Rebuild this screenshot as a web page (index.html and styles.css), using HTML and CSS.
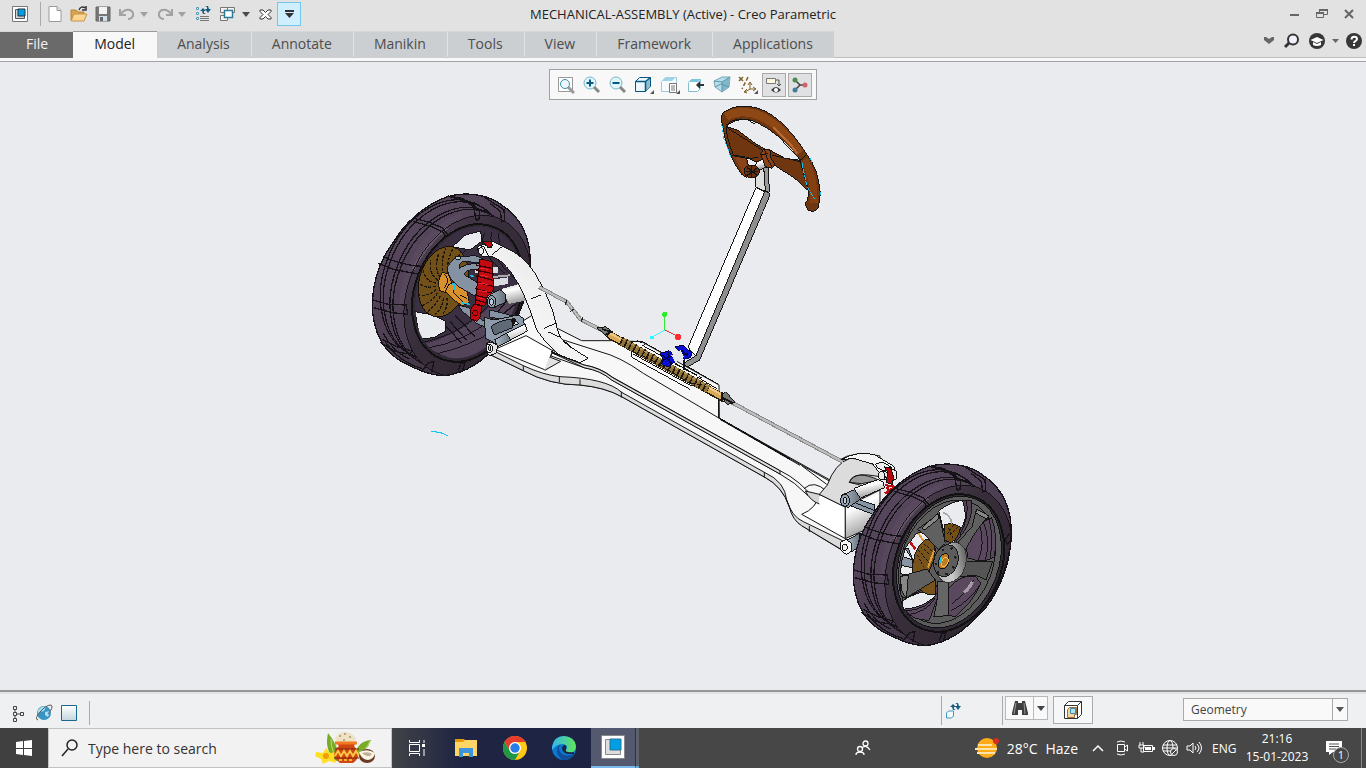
FILE: index.html
```html
<!DOCTYPE html>
<html lang="en">
<head>
<meta charset="utf-8">
<title>MECHANICAL-ASSEMBLY (Active) - Creo Parametric</title>
<link rel="stylesheet" href="styles.css">
</head>
<body>
<div class="app">
<header class="header">
  <div class="titlebar">
    <div class="quick">
      <span class="app-icon"><svg width="16" height="16" viewBox="0 0 16 16"><path d="M.5.5h15v15H.5z" fill="#fff" stroke="#777"/><path d="M3.500 3.500h9v9h-9z" fill="#cfd3d5" stroke="#555"/><path d="M6 3h7v7H6z" fill="#009fe3" stroke="#234"/></svg></span>
      <button aria-label="New"><svg width="16" height="18" viewBox="0 0 16 18"><path d="M2 1.500h8l4 4v11H2z" fill="#fff" stroke="#9a9a9a"/><path d="M10 1.500v4h4" fill="#ddd" stroke="#9a9a9a"/></svg></button>
      <button aria-label="Open"><svg width="18" height="18" viewBox="0 0 18 18"><path d="M1 15V5h5l2 2h6v8z" fill="#d9a352" stroke="#b98434"/><path d="M1 16l3-7h13l-3 7z" fill="#fbd591" stroke="#c79348"/><path d="M9 5c1-3 4-4 6-2m1-2v4h-4" fill="none" stroke="#333" stroke-width="1.500"/></svg></button>
      <button aria-label="Save"><svg width="16" height="18" viewBox="0 0 16 18"><path d="M1 2h14v14H1z" fill="#777" stroke="#666"/><path d="M4 2h8v7H4z" fill="#f2f2f2"/><path d="M4 11h8v5H4z" fill="#cfe0ea"/><path d="M5 12h3v4H5z" fill="#666"/></svg></button>
      <button aria-label="Undo"><svg width="18" height="16" viewBox="0 0 18 16"><path d="M2 3v6h6M3 8c3-5 10-6 12-1 1 4-2 6-5 6" fill="none" stroke="#a2a2a2" stroke-width="2"/></svg></button>
      <button class="drop" aria-label="Undo list"><svg width="8" height="5"><path d="M0 0h8L4 5z" fill="#a0a0a0"/></svg></button>
      <button class="lead" aria-label="Redo"><svg width="18" height="16" viewBox="0 0 18 16"><path d="M16 3v6h-6M15 8C12 3 5 2 3 7c-1 4 2 6 5 6" fill="none" stroke="#a2a2a2" stroke-width="2"/></svg></button>
      <button class="drop" aria-label="Redo list"><svg width="8" height="5"><path d="M0 0h8L4 5z" fill="#a0a0a0"/></svg></button>
      <button class="lead" aria-label="Regenerate"><svg width="16" height="16" viewBox="0 0 16 16"><path d="M1.500 1.500h2v2h-2zm0 5h2v2h-2zm0 5h2v2h-2z" fill="#fff" stroke="#559dba"/><path d="M5 10.500h9m-9 2h9m-9 2h9" stroke="#777"/><path d="M5 5l3-3 3 3H9v2l2 1H8L7 5zM10 3h2V1L10 0h3l1 3h2l-3 4-3-4z" fill="#145d85"/></svg></button>
      <button aria-label="Windows"><svg width="17" height="16" viewBox="0 0 17 16"><path d="M1.500 1.500h7v5h-7zm7 0h7v5h-7zm-7 8h7v5h-7z" fill="#f3f3f3" stroke="#777"/><path d="M5.500 4.500h8v7h-8z" fill="#fff" stroke="#2e7a99" stroke-width="1.500"/></svg></button>
      <button class="drop wide" aria-label="Windows list"><svg width="8" height="5"><path d="M0 0h8L4 5z" fill="#4a4a4a"/></svg></button>
      <button aria-label="Close window"><svg width="13" height="11" viewBox="0 0 13 11"><path d="M1 1h3l2.500 2.500L9 1h3v1.500L9 5.500l3 3V10H9L6.500 7.500 4 10H1V8.500l3-3-3-3z" fill="#fff" stroke="#333"/></svg></button>
      <button class="customize" aria-label="Customize"><svg width="9" height="8"><path d="M0 0h9v2H0zM0 3h9L4.500 8z" fill="#333"/></svg></button>
    </div>
    <h1 class="title">MECHANICAL-ASSEMBLY (Active) - Creo Parametric</h1>
    <div class="win">
      <button aria-label="Minimize"><svg width="10" height="10"><path d="M0 5h9v2H0z" fill="#666"/></svg></button>
      <button aria-label="Restore"><svg width="12" height="10" viewBox="0 0 12 10"><path d="M3.500 3V.5h8v5H8M.5 3.500h7v5h-7z" fill="none" stroke="#666"/><path d="M3 1h9M0 4h8" stroke="#666" stroke-width="2"/></svg></button>
      <button aria-label="Close"><svg width="10" height="10"><path d="M1 1l8 8M9 1L1 9" stroke="#666" stroke-width="2"/></svg></button>
    </div>
  </div>
  <div class="ribbon">
    <nav class="tabs">
      <a class="tab file" href="#">File</a><a class="tab active" href="#">Model</a><a class="tab" href="#">Analysis</a><a class="tab" href="#">Annotate</a><a class="tab" href="#">Manikin</a><a class="tab" href="#">Tools</a><a class="tab" href="#">View</a><a class="tab" href="#">Framework</a><a class="tab" href="#">Applications</a>
    </nav>
    <div class="help">
      <button aria-label="Minimize ribbon"><svg width="12" height="8"><path d="M1 0h2l3 2 3-2h2v3L6 7 1 3z" fill="#666"/></svg></button>
      <button aria-label="Search commands"><svg width="16" height="16"><circle cx="9" cy="6.500" r="5" fill="#f0f4fa" stroke="#333" stroke-width="2"/><path d="M5 10l-4 4" stroke="#333" stroke-width="3"/></svg></button>
      <button aria-label="Learning"><svg width="16" height="16"><circle cx="8" cy="8" r="8" fill="#373737"/><path d="M1.500 7L8 4l6.500 3L8 10z" fill="#fff"/><path d="M4 9v3q4 2 8 0V9l-4 2z" fill="#fff"/></svg></button>
      <button class="drop" aria-label="Learning list"><svg width="7" height="4"><path d="M0 0h7L3.500 4z" fill="#666"/></svg></button>
      <button aria-label="Help"><svg width="16" height="16"><circle cx="8" cy="8" r="8" fill="#373737"/><path d="M5.500 6.500c0-4 5.500-3.500 5.500-.5 0 2-3 2-3 4" fill="none" stroke="#fff" stroke-width="2"/><path d="M7 11h2v2H7z" fill="#fff"/></svg></button>
    </div>
  </div>
</header>

<main class="canvas">
  <svg class="model" viewBox="0 62 1366 628" role="img" aria-label="Front axle assembly with steering wheel" shape-rendering="crispEdges">
    <defs>
      <linearGradient id="side" x1="0" x2="1" y1=".3" y2=".6"><stop offset="0" stop-color="#4d3f52"/><stop offset=".1" stop-color="#463a4a"/><stop offset=".4" stop-color="#382e3b"/><stop offset="1" stop-color="#2f2732"/></linearGradient>
      <linearGradient id="tread" x1="0" x2=".7" y1=".2" y2="1"><stop offset="0" stop-color="#5a495f"/><stop offset=".55" stop-color="#4d3f53"/><stop offset="1" stop-color="#302733"/></linearGradient>
      <linearGradient id="pipe" x1="0" x2=".35" y1="0" y2="1"><stop offset="0" stop-color="#b5b5b5"/><stop offset=".4" stop-color="#fff"/><stop offset="1" stop-color="#999"/></linearGradient>
      <linearGradient id="metal"><stop offset="0" stop-color="#b0bbc8"/><stop offset="1" stop-color="#66717e"/></linearGradient>
      <linearGradient id="arm" x1="0" x2="1" y1="1" y2="0"><stop offset="0" stop-color="#cfcfcf"/><stop offset=".45" stop-color="#f4f4f4"/><stop offset="1" stop-color="#dedede"/></linearGradient>
      <linearGradient id="hub" x1="0" x2="1" y1="1" y2=".2"><stop offset="0" stop-color="#aaa"/><stop offset=".5" stop-color="#ccc"/><stop offset="1" stop-color="#555"/></linearGradient>
      <clipPath id="hull"><path id="hullShape" d="M22 355C24 290 42 230 83 175C115 120 150 88 195 60C230 38 265 27 300 27C350 28 390 42 415 64C455 90 482 135 492 185C500 240 495 300 473 358C450 420 420 465 382 495C335 545 280 570 232 572C190 570 150 550 110 530C68 505 40 465 30 420C24 400 22 380 22 355Z"/></clipPath>
      <g id="tire">
        <use href="#hullShape" fill="url(#tread)"/>
        <g clip-path="url(#hull)">
          <g fill="none" stroke="#151218" stroke-width="4">
            <ellipse cx="235" cy="282" rx="178" ry="246" transform="rotate(22 235 282)"/>
            <ellipse cx="244" cy="288" rx="178" ry="246" transform="rotate(22 244 288)"/>
            <ellipse cx="264" cy="305" rx="178" ry="246" transform="rotate(22 264 305)"/>
            <ellipse cx="273" cy="311" rx="178" ry="246" transform="rotate(22 273 311)"/>
          </g>
          <ellipse cx="308" cy="332" rx="180" ry="250" transform="rotate(22 308 332)" fill="url(#side)"/>
          <path d="M145 254Q180 180 245 130" fill="none" stroke="#87778b" stroke-width="9" opacity=".45"/>
          <path d="M110 365C118 235 180 140 290 90" fill="none" stroke="#604f65" stroke-width="16" opacity=".45"/>
          <ellipse cx="308" cy="332" rx="180" ry="250" transform="rotate(22 308 332)" fill="none" stroke="#151218" stroke-width="3"/>
        </g>
        <use href="#hullShape" fill="none" stroke="#151218" stroke-width="4"/>
        <g fill="none" stroke="#151218" stroke-width="4">
          <path d="M252 35l45 10 30 16 17 15-2 28-8 2-8-40-31-25-45-8M147 100l48 12 37 17 18 22-2 12-13-20-38-20-52-13M55 216l44 16 45 10 28 2-2 24-35-5-50-10-45-18M24 345l45 13 55 2 4 28-47-5-55-15M50 463l48 23 42 12-4 10-44-8-47-28M170 560l20-27 17-3-7 30M280 557l8-22 12-2-8 26M357 36l34 22 26 16 2 35-9 2-4-32-30-23M492 260l-8 8-6-15 15-20"/>
          <path d="M60 470q45 63 110 80M55 445q28 55 78 77M492 280Q475 375 425 440"/>
        </g>
        <ellipse cx="308" cy="324" rx="158" ry="213" transform="rotate(22 308 324)" fill="#302834" stroke="#111" stroke-width="6"/>
      </g>
      <clipPath id="leftHole"><ellipse cx="307" cy="322" rx="148" ry="205" transform="rotate(22 307 322)"/></clipPath>
    </defs>

    <!-- left wheel -->
    <g transform="translate(365 185) scale(.33333)" stroke-width="3">
      <use href="#tire"/>
      <g clip-path="url(#leftHole)" stroke="#151218">
        <path d="M130 100h380v450H130z" fill="#3a3042" stroke="none"/>
        <path d="M165 480Q280 455 370 370L450 330 450 480 330 550Z" fill="#544459" stroke="none"/>
        <path d="M170 472q120-20 220-130M185 490q120-20 210-100M220 505q90-20 170-70M360 145q-30 45 60 120M380 140q-15 70 70 140M400 145q0 70 70 120M345 140q-50 70-80 90" fill="none"/>
        <path d="M262 185L302 150 347 138 351 168 315 195Z" fill="#e9ebef"/>
        <path d="M150 380L205 390 243 410 240 440 205 458 165 462Z" fill="#e9ebef"/>
        <path d="M330 245h70v20h-70zM370 285l60-8v20l-60 10z" fill="#d9dce1" stroke="none"/>
        <path d="M375 277l60-6" stroke="#aaa" stroke-width="6"/>
        <path d="M240 420l50 55M255 410l50 55M270 390l60 65M390 390l50-60M410 390l50-40" fill="none" stroke-width="4"/>
      </g>
      <ellipse cx="235" cy="290" rx="72" ry="108" transform="rotate(16 235 290)" fill="#725019" stroke="#161008"/>
      <g fill="none" stroke="#1e1608" stroke-width="4" stroke-dasharray="9 4">
        <path d="M236 270Q225 225 243 190M226 278Q205 245 222 205M218 286Q190 265 197 225M214 294Q180 290 175 255M212 304Q180 312 165 295M214 314Q188 335 163 330M218 324Q200 350 170 362M226 332Q212 362 188 380M236 338Q232 370 210 388M246 340Q250 366 232 388M247 265Q245 225 265 188M258 262Q262 235 288 203"/>
      </g>
      <g fill="#d9912e" stroke="#1b1308"><path d="M232 262l18 5 10 25-15 32-22-8-3-28z"/><path d="M250 300l22-12 34 33 7 30-20 12-27-18-25-26z"/><path d="M238 268q20 15 0 40M271 292l-5 30 28 28M286 330l20 10" fill="none"/></g>
      <path d="M260 297h18m-9-12v30m22 39l25 4m-2-86l13 2" stroke="#18bfe8" stroke-width="4" fill="none"/>
      <g fill="#8592a1" stroke="#15191f">
        <path d="M280 360l30 8 40 37 28 2-5 25-40-18-42-36z"/><path d="M375 375l70 18-10 12-60-8z"/>
        <path fill-rule="evenodd" d="M263 225l15-12 22 2 28-4 25 10-5 32-30 1q-25 6-17 18l110 60-20 36-107-61q-35-25-38-60zM295 228q-14 5-12 24 8-14 58-18z"/>
        <ellipse cx="279" cy="219" rx="9" ry="6" fill="#b8c2cd"/>
      </g>
      <g stroke="#330000" fill="#c20b10">
        <path d="M345 222l36 8 5 82-28 52-28-8z"/>
        <path d="M332 240l48 10m-48 5l55 12m-55 5l55 15m-57 3l57 15m-57 5l52 15m-52 5l44 12m-44 2l35 10" stroke="#3b0006" stroke-width="4"/>
        <path d="M345 249l25 4m-26 17l26 5m-30 19l28 4m-30 18l28 4m-28 18l20 3" stroke="#f0232c"/>
        <path d="M317 372l10-14 24 5-5 32-9 14-21-8z"/>
        <circle cx="331" cy="384" r="8"/>
      </g>
    </g>

    <!-- chassis beam -->
    <g transform="translate(480 320) scale(.33333)" fill="#f7f7f7" stroke="#131313" stroke-width="3" stroke-linejoin="round">
      <path d="M175-25L232 25 305 62H395L485 65 717 195 718 295 1050 484 1165 540 1165 635 1095 696 965 617Q940 600 928 560Q908 500 855 472L425 230Q375 202 300 195Q210 195 130 152L20 99 20 70 100 20Z"/>
      <path d="M22 83L130 137Q190 165 240 170Q380 175 425 217L855 458Q915 485 920 540Q935 590 970 605L1100 668 1095 695 965 617Q937 600 928 560Q908 500 855 472L425 230Q375 202 300 195Q210 195 130 152L20 99Z" fill="#dcdcdc"/>
      <path d="M130 137v15M238 170v17M300 178v17M424 215v18M853 456v18M988 618v18" fill="none"/>
      <path d="M250 60L360 95Q420 110 490 160L718 295M215 98L312 135Q360 142 398 172L900 452Q960 480 1010 545M210 107L312 143Q365 152 395 180L900 462Q945 486 985 528" fill="none"/>
      <path d="M215 98l97 37q48 8 86 38L900 452v10L395 180q-32-28-83-37z" fill="#ddd"/>
      <path d="M718 295L1050 480M965 437L1040 493M972 506q30-28 68 8M720 298L960 436" fill="none"/>
      <path d="M718 295L930 417" stroke-width="5"/>
      <path d="M45 88L138 47 218 92 196 150Z" fill="#fff"/>
      <path d="M218 92l-7 20 31 12-46 26-3-1M216 90l55 25" fill="#e1e1e1"/>
      <path d="M965 583Q1010 565 1018 523L1096 561V656Z" fill="#fff"/>
      <path d="M1096 561L1200 510V610L1096 656Z" fill="url(#pipe)"/>
      <path d="M1018 523L1042 495Q1065 430 1110 415Q1160 415 1200 445V470L1165 465Q1115 460 1108 487L1160 500 1095 561Z" fill="#dcdcdc"/>
      <path d="M1018 523l-42-10q15 30 42 39" fill="#d4d4d4"/>
      <path d="M1075 422Q1120 390 1200 408V450Q1160 412 1110 415Z"/>
      <path d="M1108 487q20-40 90-6l-54 10z" fill="#999"/>
    </g>

    <!-- upper left arm and joints -->
    <g transform="translate(365 185) scale(.33333)" stroke="#151515" stroke-width="3">
      <path d="M410 312l70-20 25 50-73 15z" fill="url(#pipe)" stroke="none"/>
      <path d="M500 267l14 10 8 20-8 10" fill="#8d9bac"/>
      <path d="M338 185L356 178 380 168 415 185Q470 205 510 265Q560 350 573 415Q580 460 610 482L670 520 645 533 583 510Q540 475 515 435Q480 320 440 265Q408 220 380 215L350 213Q335 203 338 185Z" fill="url(#arm)"/>
      <path d="M380 210L411 185M497 342L527 330M537 430L572 415M558 500L585 510M548 440l36 16 40 35" fill="none"/>
      <path d="M345 182l12 3 15 30 8 0M356 178l25 10" fill="none"/>
      <path d="M355 171l22 0 7 10-14 8z" fill="#b9080e"/>
      <ellipse cx="348" cy="198" rx="8" ry="10" fill="#eee"/>
      <path d="M367 333L405 314 421 327V352L386 368Q365 365 365 345Z" fill="url(#metal)"/>
      <ellipse cx="380" cy="350" rx="13" ry="18" fill="#91a0b0"/><ellipse cx="379" cy="351" rx="6" ry="10" fill="#bdc9d5"/>
      <path fill-rule="evenodd" d="M357 397L388 405 459 390 475 400 478 420 400 459 390 475 361 459 360 427ZM382 430l65-31 13 17-69 30z" fill="#8d9bac"/>
      <path d="M378 425Q400 405 440 403l3 25-55 22z" fill="#606a76"/>
      <path d="M390 463L480 417 487 438 400 484Q390 480 390 463Z" fill="url(#pipe)"/>
      <path d="M390 463l35-18 12 21-37 18q-10-8-10-21z" fill="url(#metal)"/>
      <path d="M364 475l18-3 16 10-4 22-20 8-10-12z" fill="#e4e4e4"/><ellipse cx="373" cy="490" rx="9" ry="13" fill="#f4f4f4"/><ellipse cx="374" cy="490" rx="4" ry="8" fill="#ddd"/>
    </g>

    <!-- tie rods -->
    <g fill="none" stroke-linejoin="round">
      <path d="M539 287l28 15 13 17 31 16M731 402l112 60" stroke="#8a8a8a" stroke-width="4"/>
      <path d="M539 287l28 15 13 17 31 16M731 402l112 60" stroke="#bdbdbd" stroke-width="2"/>
      <path d="M567 300l-2 5M574 309l-4 3M583 317l-2 5" stroke="#222"/>
    </g>

    <!-- steering column and wheel -->
    <g transform="translate(640 95) scale(.33333)" stroke="#151515" stroke-width="3">
      <path d="M348 278L374 290 168 784 144 757Z" fill="#fff"/>
      <path d="M374 290L387 292 388 305 179 795 140 817 131 805 168 782Z" fill="#8e8e8e"/>
      <path d="M347 240L371 215 376 289 347 276Z" fill="#ddd"/><path d="M371 214h14l3 78-12-3z" fill="#999"/>
      <g fill="#703610">
        <path d="M256 94L292 105 345 145 389 170 390 190 358 207 322 187 281 184 270 170Z"/>
        <path d="M362 174L384 162 435 190 480 196 505 287 464 250 400 208 377 216Z"/>
        <path d="M245 80Q240 58 257 48Q285 30 330 35C395 42 450 100 500 178Q535 220 541 295L535 338Q525 355 505 345Q490 330 502 315L507 292 480 195C445 145 385 92 330 75Q285 67 258 95Q260 130 280 180L320 187 322 205 340 225 320 247 306 239Q260 180 245 80Z"/>
        <path d="M284 186h34l4 50-10 6z" fill="#8a4318" stroke="none"/>
      </g>
      <path d="M258 65Q295 43 345 57Q420 82 480 174" fill="none" stroke="#8d4815" stroke-width="25"/>
      <path d="M494 194Q524 250 522 325" fill="none" stroke="#844013" stroke-width="22"/>
      <path d="M400 98Q450 142 472 175" fill="none" stroke="#b96b35" stroke-width="6"/>
      <path d="M257 92Q280 67 320 73L345 87M257 95l110 70M275 181l50 10 28-4M480 200l-85-20M500 178l-22 20" fill="none"/>
      <path d="M349 201l22-9 13 8-3 16-21 8-13-8z" fill="url(#pipe)"/>
      <path d="M362 177l10-15 21 4-3 20 15 22-9 12-20-5z" fill="#8b4316"/><path d="M374 166l8 25 14 25M364 178l20-2" fill="none"/>
      <ellipse cx="335" cy="229" rx="23" ry="19" fill="#6b310b"/><path d="M317 229h38m-20-18v38m-14-32l30 24m0-22l-30 23" fill="none" stroke-width="4"/>
      <path d="M245 86l7 45 21 55M486 205l15 70 23 38M511 188l5 15m26 88v8" fill="none" stroke="#14c7f2" stroke-dasharray="14 4"/>
      <path d="M75 705V658" stroke="#36e836"/><path d="M75 705l40 20" stroke="#f33"/><path d="M75 705l-40 22" stroke="#3df5fa"/>
      <g stroke="none"><circle cx="74" cy="658" r="8" fill="#28ef28"/><circle cx="114" cy="726" r="9" fill="#ff2d2d"/><circle cx="36" cy="728" r="6" fill="#30f5fa"/></g>
    </g>

    <!-- rack housing -->
    <g transform="translate(580 300) scale(.33333)" stroke="#151515" stroke-width="3" fill="none">
      <path d="M155 155V172L330 268M160 162L335 258M165 150L370 268M152 125h35l63 35M158 142L345 250M320 198l95 55M350 230l60 36M185 135L350 225"/>
      <path d="M85 103L435 297" stroke="#291f0e" stroke-width="24"/><path d="M87 103L435 295" stroke="#d8aa57" stroke-width="18"/><path d="M90 100L435 290" stroke="#f0cb87" stroke-width="5"/>
      <path d="M122 122L385 268" stroke="#8e7237" stroke-width="24"/>
      <path d="M122 122L385 268" stroke="#201808" stroke-width="26" stroke-dasharray="5 10"/>
      <path d="M128 117L388 261" stroke="#b3914e" stroke-width="5" stroke-dasharray="8 7"/>
      <path d="M160 155l55 25 115 70 35 5M170 120l25 15M260 180l105 53" stroke-dasharray="20 7"/>
      <path d="M52 84l25-4 19 15-16 14-14-12zM423 289l14-14 27 31-22 8z" fill="#777"/><path d="M65 87l28 8-17 10M425 292l35 17M427 277l-2 25" stroke-width="5"/>
      <g fill="#090ed8" stroke="#030340"><path d="M240 160l28-8 15 16 7 13-12 10-14 10-19-8 5-15z"/><path d="M285 140l24-4 27 23-5 14-20 5-8-17z"/><path d="M247 165l30 25m5-25l-35 17m18-25l7 40m30-51l22 23m-27-8l26 1" stroke-width="4"/></g>
      <path d="M274 166l28-15 10 20-25 17z" fill="#e4e4ed" stroke="none"/>
      <path d="M312 180v30M416 295v58" stroke-width="5"/>
    </g>

    <!-- right wheel -->
    <g transform="translate(780 440) scale(.33333)" stroke="#151515" stroke-width="3">
      <path d="M182 60Q235 30 285 45L340 78 350 100 315 120 278 72 220 55Z" fill="#f5f5f5"/>
      <path d="M285 73l23-7 29 18-14 15-28-15zM309 96l20-14 20 12v22l-23 12z" fill="#eee"/>
      <path d="M312 80l20 5 8 22-2 27-20-7 6-30z" fill="#b3090d"/>
      <path d="M316 135l28 5-30 20m5-20l15 24m-8-28l-4 27" fill="none" stroke="#c30b0d" stroke-width="6"/>
      <path d="M222 145L295 118 310 127 313 143 240 175Z" fill="url(#pipe)"/>
      <path d="M218 173l67 22v30l-72-27z" fill="#8795a4"/><path d="M217 185l66 26" fill="none"/>
      <path d="M184 166l40-17 18 28-38 26q-18-5-20-37z" fill="url(#metal)"/><ellipse cx="195" cy="181" rx="13" ry="18" fill="#91a0b0"/><ellipse cx="195" cy="182" rx="6" ry="9" fill="#bdc9d5"/>
      <ellipse cx="305" cy="107" rx="9" ry="13" fill="#e9e9e9"/>
      <path d="M202 300l36-20v40l-23 15z" fill="url(#metal)"/>
      <path d="M182 307l17-9 15 12v24l-15 9-17-12z" fill="#f7f7f7"/><ellipse cx="194" cy="322" rx="8" ry="10" fill="#eee"/>
      <use href="#tire" x="198" y="45"/>
      <ellipse cx="507" cy="366" rx="148" ry="205" transform="rotate(22 507 366)" fill="#5c5c5c" stroke="#111" stroke-width="3"/>
      <ellipse cx="501" cy="365" rx="137" ry="192" transform="rotate(22 501 365)" fill="none"/>
      <path d="M476 213Q510 185 548 181L575 182Q580 210 555 270L526 308 500 305Z" fill="#e9ebef"/>
      <path d="M548 181l27 1q5 42-20 88l-29 38q-10-10 12-36 30-30 10-91z" fill="#554458"/>
      <path d="M560 182q8 50-20 102" fill="none"/>
      <path d="M493 255q25-10 48 7-2 30-28 47l-18-9z" fill="#734f16"/><path d="M505 263l18 40m-2-47l-22 30m34-24l-30 30" stroke-dasharray="7 6"/>
      <path d="M490 218q22 8 25 33" fill="none" stroke="#aaa" stroke-width="5"/>
      <path d="M557 315Q593 248 635 233Q654 290 643 350Q615 373 564 354Z" fill="#5a495e"/><path d="M600 260q15 50-5 102m15-116q23 55 6 114m11-122q15 55 3 115" fill="none"/>
      <path d="M505 445Q545 400 587 410L603 430Q580 485 525 530L505 526Z" fill="#5a495e"/><path d="M580 421q-15 35-65 70M600 435q-30 48-88 78" fill="none"/><path d="M577 425q-8 20-25 32" fill="none" stroke="#a798aa" stroke-width="10"/>
      <path d="M367 483Q410 453 470 435L475 465 448 541Q395 542 373 507Z" fill="#5a495e"/><path d="M367 483q45-30 90-31l10 15q-35 36-97 41z" fill="#e9ebef"/><path d="M415 445q25-25 53-28v45q-28 8-53-17z" fill="#77521a"/><path d="M370 513q75 0 105-60M380 525q60-8 85-50" fill="none"/>
      <path d="M375 325L410 280 430 276 462 295 466 333 445 400 382 407 360 400Z" fill="#e9ebef"/>
      <path d="M368 350l30 10v23l-35-7zM375 325l10 0 14 35z" fill="#8795a4"/><path d="M391 307l15 20" stroke="#c40c10" stroke-width="7"/>
      <path d="M399 400Q393 335 435 300L465 298 465 350 445 400Z" fill="#77521a"/><path d="M412 345l18 35m-15-50l32 38m-25-48l25 21m-15-30l25 23" stroke-dasharray="7 5"/><path d="M415 280l15 22m32 30l-18 50" stroke="#e09b34" stroke-width="6"/>
      <path d="M376 405l65-18 25 33-90 55q-15-5-15-20v-45z" fill="#606060"/><path d="M361 410l24-5-6 71-14-25z" fill="#888"/>
      <path d="M412 268L477 222 496 310 475 329 433 283Z" fill="#606060"/><path d="M425 265l48-45 3 16-42 34z" fill="#888"/>
      <path d="M532 310L576 260 590 207 626 231Q595 255 556 330Z" fill="#606060"/><path d="M590 207l36 20-5 10-34-18z" fill="#888"/>
      <path d="M550 365h88l-20 55-30-14-55 4z" fill="#555"/>
      <path d="M472 425h35v101l-46 5q15-54 11-106z" fill="#666"/>
      <ellipse cx="514" cy="367" rx="43" ry="62" transform="rotate(18 514 367)" fill="url(#hub)" stroke="#333"/>
      <ellipse cx="498" cy="362" rx="36" ry="49" transform="rotate(18 498 362)" fill="#5d5d5d"/>
      <ellipse cx="491" cy="364" rx="15" ry="24" transform="rotate(18 491 364)" fill="#bd7d24"/><path d="M485 365q8-20 17-12t-6 25q-15 6-11-13" fill="none" stroke="#ffc04d"/><path d="M483 352v18" stroke="#17c7ed" stroke-width="4"/>
      <g fill="#1e1e1e" stroke="none"><circle cx="490" cy="330" r="4"/><circle cx="515" cy="325" r="4"/><circle cx="526" cy="352" r="4"/><circle cx="520" cy="382" r="4"/><circle cx="500" cy="402" r="4"/><circle cx="474" cy="398" r="4"/><circle cx="468" cy="372" r="4"/></g>
    </g>
    <path d="M431 432q9-1 17 4" fill="none" stroke="#12c8ed"/>
  </svg>

  <div class="view-tools">
    <button aria-label="Refit"><svg width="18" height="18"><path d="M1.500 1.500h14v14h-14z" fill="#fff" stroke="#999"/><circle cx="8" cy="8" r="4.500" fill="#eaf8fb" stroke="#398fa9"/><path d="M11 11l6 6" stroke="#999" stroke-width="3"/></svg></button>
    <button aria-label="Zoom in"><svg width="18" height="18"><circle cx="7" cy="7" r="6" fill="#e2f5fa" stroke="#78b9ca"/><path d="M3.500 7h7M7 3.500v7" stroke="#075b83" stroke-width="2"/><path d="M11 11l5 5" stroke="#888" stroke-width="3"/></svg></button>
    <button aria-label="Zoom out"><svg width="18" height="18"><circle cx="7" cy="7" r="6" fill="#e2f5fa" stroke="#78b9ca"/><path d="M3.500 7h7" stroke="#075b83" stroke-width="2"/><path d="M11 11l5 5" stroke="#888" stroke-width="3"/></svg></button>
    <button aria-label="Display style"><svg width="20" height="18"><path d="M1.500 5.500l4-4h11v9l-5 5h-10z" fill="#eef8fc" stroke="#05577d"/><path d="M12 6l4-4v9l-4 4z" fill="#8abfd3"/><path d="M1.500 5.500h10v10m0-10l5-4" fill="none" stroke="#05577d" stroke-width="1.500"/><path d="M20 14v4h-4z" fill="#555"/></svg></button>
    <button aria-label="Saved views"><svg width="20" height="18"><path d="M1.500 5.500l4-4h11v9l-5 5h-10z" fill="#f7fbfd" stroke="#9bcada"/><path d="M2 5l4-4h10l-4 4z" fill="#9dd5e7"/><path d="M9.500 7.500h7v9h-7z" fill="#fff" stroke="#777"/><path d="M11 10h4m-4 2h4m-4 2h4" stroke="#777"/><path d="M20 14v4h-4z" fill="#555"/></svg></button>
    <button aria-label="View manager"><svg width="18" height="18"><path d="M1.500 6.500l3-3h9v9l-3 3h-9z" fill="#fff" stroke="#84bed1"/><path d="M2 6l3-3h9l-3 3z" fill="#7bc8e0"/><path d="M9 9l4-4v3h4v2h-4v3z" fill="#333"/></svg></button>
    <button aria-label="Perspective"><svg width="18" height="18"><path d="M1 5l8-4h8l-1 10-7 5-7-5z" fill="#b5dce8" stroke="#76a8b9"/><path d="M9 6l8-5-1 10-7 5z" fill="#83b5c9"/><path d="M1 5l8 1v10M9 6l8-5M2 11l6-3 8 3" fill="none" stroke="#5f98ad"/></svg></button>
    <button aria-label="Datum display"><svg width="20" height="18"><path d="M1 1l4 4m0-4L1 5" fill="none" stroke="#806029" stroke-width="1.500"/><path d="M10 1L4 13" stroke="#806029" stroke-width="1.500" stroke-dasharray="4 2"/><path d="M12 7v6l-5 3m5-3h6M10 9l2-3 2 3M9 13l-3 3 3 1m6-6l3 2-3 2" fill="none" stroke="#806029"/><path d="M20 14v4h-4z" fill="#555"/></svg></button>
    <button class="on" aria-label="Annotation display"><svg width="18" height="18"><path d="M1.500 2.500h9v5h-9z" fill="#fff8df" stroke="#777"/><path d="M11 4h3v6m-2-2l2 2 2-2" stroke="#555" fill="none"/><path d="M6 14q5-6 10 0-5 5-10 0z" fill="#444"/><circle cx="11" cy="14" r="2" fill="#fff"/></svg></button>
    <button class="on" aria-label="Spin center"><svg width="18" height="18"><path d="M4 4l5 5-5 5m5-5h5" fill="none" stroke="#444" stroke-width="1.500"/><circle cx="4" cy="4" r="2.500" fill="#4c8a4e"/><circle cx="4" cy="14" r="2.500" fill="#427e9b"/><circle cx="14" cy="9" r="2.500" fill="#d56267"/></svg></button>
  </div>
</main>

<section class="status">
  <div class="status-left">
    <button aria-label="Model tree"><svg width="13" height="17"><path d="M1.500 1.500h3v3h-3zm0 6h3v3h-3zm0 6h3v3h-3zm7-6h3v3h-3zM5 9h3M3 5v2m0 4v2" fill="none" stroke="#444"/></svg></button>
    <button aria-label="Browser"><svg width="18" height="18"><circle cx="9" cy="9" r="7" fill="#3795c3"/><path d="M3 6q4-5 8-3l-2 4-4 1-2 3M10 8l5-1-2 6-3-2z" fill="#acdff1"/><path d="M3 16Q-1 15 5 8T16 1q3 2-3 9" fill="none" stroke="#555"/></svg></button>
    <button aria-label="Full screen"><svg width="16" height="16"><defs><linearGradient id="panel" x2="0" y2="1"><stop stop-color="#fff"/><stop offset="1" stop-color="#c4d6df"/></linearGradient></defs><path d="M.5.5h15v15H.5z" fill="url(#panel)" stroke="#176889"/></svg></button>
  </div>
  <div class="status-right">
    <button class="regen" aria-label="Regeneration status"><svg width="18" height="18"><path d="M1.500 11l2-2h5v5l-2 2h-5z" fill="#f4fcff" stroke="#419abb"/><path d="M5 5l3-3 3 3H9v2l2 1H8L7 5zM10 4h2V2l-2-1h3l1 3h2l-3 4-3-4z" fill="#145d85"/></svg></button>
    <div class="find"><button aria-label="Find"><svg width="18" height="18"><path d="M4 2h3v2h4V2h3l3 12v2h-6v-5H7v5H1v-2z" fill="#3e3e3e"/><path d="M5 4L3 15m10-11l1 11" stroke="#999"/></svg></button><button class="find-drop" aria-label="Find options"><svg width="8" height="5"><path d="M0 0h8L4 5z" fill="#444"/></svg></button></div>
    <button class="box" aria-label="Select in box"><svg width="20" height="20"><path d="M1.500 5.500l4-4h13v13l-4 4h-13zM1.500 5.500h13v13m0-13l4-4" fill="#fff" stroke="#333"/><path d="M4.500 9.500l2-2h7v7h-2v3h-7z" fill="#f4d4a1" stroke="#98703b"/><path d="M7.500 8.500h5v5h-5z" fill="#a9e3f4" stroke="#398cab"/></svg></button>
    <div class="filter"><select aria-label="Selection filter"><option>Geometry</option></select><svg width="8" height="5"><path d="M0 0h8L4 5z" fill="#555"/></svg></div>
  </div>
</section>

<footer class="taskbar">
  <button class="start" aria-label="Start"><svg width="16" height="16"><path d="M0 2l7-1v7H0zm8-1l8-1v8H8zM0 9h7v6l-7-1zm8 0h8v7l-8-1z" fill="#fff"/></svg></button>
  <div class="search"><svg width="18" height="18"><circle cx="11" cy="6" r="5" fill="none" stroke="#222" stroke-width="1.500"/><path d="M7 10l-6 7" stroke="#222" stroke-width="1.500"/></svg><input type="text" aria-label="Search" placeholder="Type here to search">
    <svg class="pot" width="64" height="34" viewBox="0 0 64 34"><path d="M22 30Q10 20 14 2q10 12 12 27zM41 25Q43 10 57 9q-4 12-16 16z" fill="#78ab28"/><path d="M17 8q0 13 7 20m18-4q10-4 14-14" stroke="#c6d967" fill="none"/><path d="M2 21l7 1 3-5 4 5 6-1-2 6 2 5-7-2-6 3-2-5-6-3z" fill="#ffdf25"/><circle cx="12" cy="25" r="3" fill="#f29c09"/><path d="M24 11q-5-3-1-6 2-4 8-4t9 4q4 3 0 6z" fill="#eee2c4"/><path d="M25 5h2m3-2h2m3 3h2m-8 3h2" stroke="#baa780" stroke-width="2"/><path d="M22 11h20l-2 4q9 10-1 17H26q-11-9-1-17z" fill="#cf4711"/><path d="M21 12h22" stroke="#f27821" stroke-width="3"/><path d="M21 18h24M20 27h25" stroke="#7b200d"/><path d="M21 25l3-5 3 5 3-5 3 5 3-5 3 5 3-5 3 5" fill="none" stroke="#fbc545" stroke-width="2"/><path d="M25 29h15" stroke="#f4b62e" stroke-width="2" stroke-dasharray="3 2"/><ellipse cx="53" cy="25" rx="8" ry="7" fill="#6a3926"/><path d="M45 21q9-4 16 1-1 6-7 7-6 0-9-8z" fill="#faf4e4"/><path d="M48 22q6-2 10 1-4 5-10-1z" fill="#bfae95"/></svg>
  </div>
  <div class="apps">
    <button aria-label="Task View"><svg width="18" height="16"><path d="M1.500 4.500h10v7h-10zM1.500 0v2.500h10V0m-10 16v-2.500h10V16M16 0v3m0 6v7" fill="none" stroke="#fff"/><path d="M14 4h3v3h-3z" fill="#fff"/></svg></button>
    <button aria-label="File Explorer"><svg width="22" height="20"><path d="M0 1h9l2 2h11v15H0z" fill="#e39a0a"/><path d="M0 4h8l2-2h12v16H0z" fill="#ffd665"/><path d="M4 10h14v9h-4v-4H8v4H4z" fill="#3d95de"/></svg></button>
    <button aria-label="Chrome"><svg width="24" height="24" viewBox="0 0 24 24"><circle cx="12" cy="12" r="12" fill="#ffc815"/><path d="M1.600 6A12 12 0 0 1 22.400 6H12a6 6 0 0 0-5 9z" fill="#e73b2e"/><path d="M1.600 6A12 12 0 0 0 12 24l5-9a6 6 0 0 1-10 0z" fill="#1e9847"/><circle cx="12" cy="12" r="6" fill="#fff"/><circle cx="12" cy="12" r="4.700" fill="#287de9"/></svg></button>
    <button aria-label="Edge"><svg width="24" height="24" viewBox="0 0 24 24"><defs><linearGradient id="edge"><stop stop-color="#35b5ed"/><stop offset="1" stop-color="#60e55b"/></linearGradient></defs><circle cx="12" cy="12" r="12" fill="#087bd0"/><path d="M0 11Q2 0 12 0q11 1 12 10 0 7-7 7-5 0-3-3 3-5-3-6-7 0-11 6z" fill="url(#edge)"/><path d="M9 8q-4 4 0 9 5 5 14 0-5 8-12 7-6-3-6-9 0-5 4-7z" fill="#114f9c"/><path d="M13 9q-3 0-3 4 1 5 8 5h4v-2q-10 1-8-3 1-3-1-4z" fill="#1d2445"/></svg></button>
    <button class="current" aria-label="Creo Parametric"><svg width="24" height="24"><path d="M.5.5h23v23H.5z" fill="#fff" stroke="#888"/><path d="M4.500 4.500h15v15h-15z" fill="#ddd" stroke="#888"/><path d="M9 4h11v11H9z" fill="#009fe3" stroke="#287297"/></svg></button>
    <span class="stack"></span>
  </div>
  <button class="people" aria-label="People"><svg width="16" height="16"><g fill="none" stroke="#fff" stroke-width="1.300"><circle cx="5" cy="9" r="2.500"/><path d="M1 15q0-3 4-3t4 3"/><circle cx="10.500" cy="3.500" r="2.500"/><path d="M7 8q4-4 8 2"/></g></svg></button>
  <div class="tray">
    <button class="weather"><svg width="24" height="22"><circle cx="12" cy="11" r="10" fill="#ffac18"/><path d="M3 8h14M0 12h22M2 16h18" stroke="#ffe3ad" stroke-width="2"/><circle cx="21" cy="4" r="3" fill="#d72c20"/></svg><span>28°C</span><span>Haze</span></button>
    <button aria-label="Hidden icons"><svg width="12" height="8"><path d="M1 7l5-5 5 5" fill="none" stroke="#fff" stroke-width="1.500"/></svg></button>
    <button aria-label="Meet Now"><svg width="14" height="16"><path d="M2.500 4.500h7v7h-7zM9.500 7l3-2v6l-3-2M2 2q4-2 8 0M2 14q4 2 8 0" fill="none" stroke="#fff"/></svg></button>
    <button aria-label="Battery"><svg width="17" height="14"><path d="M5.500 4.500h9v6h-9z" fill="none" stroke="#fff"/><path d="M7 6h6v3H7zM15 6h2v3h-2z" fill="#fff"/><path d="M1 4h5v3H1zM2 1v3m3-3v3M3 7v4h3" fill="none" stroke="#fff"/></svg></button>
    <button aria-label="Network"><svg width="17" height="17"><g fill="none" stroke="#fff"><circle cx="8" cy="8" r="7.500"/><ellipse cx="8" cy="8" rx="3" ry="7.500"/><path d="M1 5h14M1 11h8M.5 8h15"/><circle cx="12" cy="12" r="3.500" fill="#474747"/><path d="M10 14l4-4"/></g></svg></button>
    <button aria-label="Volume"><svg width="17" height="14"><path d="M1 5h3l3-3v10L4 9H1zM9 5q2 2 0 4m2-6q4 4 0 8m2-10q5 6 0 12" fill="none" stroke="#fff"/></svg></button>
    <span class="lang">ENG</span>
    <div class="clock"><time>21:16</time><time>15-01-2023</time></div>
    <button class="notice" aria-label="Notifications"><svg width="18" height="16"><path d="M1 1h16v11H8l-4 3v-3H1z" fill="#fff"/><path d="M4 4h10M4 6.500h10M4 9h7" stroke="#555"/></svg><span>1</span></button>
    <span class="peek"></span>
  </div>
</footer>
</div>
</body>
</html>
```
FILE: styles.css
```css
* { box-sizing: border-box; }
html, body { height: 100%; margin: 0; }
body { font-family: "Open Sans", "Noto Sans", sans-serif; font-size: 12px; color: #222; }
svg { display: block; flex: none; }
button { display: flex; align-items: center; justify-content: center; margin: 0; padding: 0; border: 0; background: transparent; color: inherit; font: inherit; flex: none; }
.app { display: flex; flex-direction: column; min-height: 100vh; overflow: hidden; }
.header { background: #e2e2e2; border-bottom: 1px solid #a3a2a8; box-shadow: inset 0 -3px #f8f8f8, inset 0 -4px #bebebe; padding-bottom: 3px; }
.titlebar { display: grid; grid-template-columns: 1fr auto 1fr; height: 31px; }
.quick { display: flex; align-items: center; height: 28px; }
.quick button { width: 24px; height: 24px; }
.quick .drop { width: 10px; }
.quick .lead { margin-left: 4px; }
.quick .wide { margin: 0 2px; }
.quick .customize { background: #cfefff; border: 1px solid #73c7ed; }
.app-icon { width: 41px; height: 24px; margin-right: 2px; display: grid; place-items: center; border-right: 1px solid #aaa; }
.title { margin: 0; font-size: 13px; font-weight: 400; line-height: 28px; white-space: nowrap; }
.win, .help { display: flex; justify-content: flex-end; align-items: center; }
.win { height: 28px; padding-right: 4px; }
.win button { width: 27px; height: 24px; }
.ribbon { display: flex; justify-content: space-between; height: 27px; }
.tabs { display: flex; gap: 1px; height: 27px; }
.tab { padding: 0 21px 0 20px; background: #cbcfd2; border-top: 1px solid #d4d7d9; color: #4d4d4d; font-size: 14px; line-height: 23px; text-decoration: none; }
.file { padding: 0 25px 0 26px; margin-right: -1px; color: #f2f2f2; background: #6a6a6a; }
.active { padding: 0 22px 0 21px; margin-right: -1px; color: #222; background: #f8f8f8; border-top-color: #999; }
.help { padding-right: 4px; gap: 9px; height: 20px; }
.help .drop { margin: 0 -2px; }
.canvas { position: relative; flex: 1; min-height: 0; background: #e9ebef; display: flex; }
.model { flex: 1; width: 100%; height: 100%; min-width: 0; }
.view-tools { position: absolute; top: 7px; left: 50%; transform: translateX(-50%); display: flex; gap: 2px; padding: 2px 4px; border: 1px solid #a0a0a0; background: #f8f8f8; }
.view-tools button { width: 24px; height: 25px; }
.view-tools .on { background: #dfe1e2; border: 1px solid #aaa; height: 24px; align-self: center; }
.status { display: flex; justify-content: space-between; height: 38px; background: #eef0f2; border-top: 2px solid #939597; box-shadow: inset 0 2px #e0e2e3; }
.status-left { display: flex; align-items: center; padding: 0 8px 0 6px; margin-top: 9px; height: 24px; border-right: 1px solid #aaa; }
.status-left button { width: 25px; height: 24px; }
.status-right { display: flex; align-items: flex-start; padding: 4px 18px 0 0; }
.regen { width: 62px; height: 29px; padding-right: 37px; border-left: 1px solid #aaa; border-right: 1px solid #aaa; }
.find { display: flex; margin: 0 2px; border: 1px solid #b8b8b8; background: #f9f9f9; height: 24px; }
.find button { width: 27px; }
.find .find-drop { width: 14px; border-left: 1px solid #bbb; }
.box { width: 40px; height: 28px; margin-left: 3px; border: 1px solid #aaa; background: #f6f7f8; }
.filter { width: 165px; height: 23px; margin: 2px 0 0 90px; border: 1px solid #aaa; background: #f9f9f9; display: flex; align-items: center; }
.filter select { appearance: none; flex: 1; height: 21px; padding: 0 7px; border: 0; border-right: 1px solid #aaa; background: transparent; color: #444; font: inherit; }
.filter svg { margin: 0 3px; }
.taskbar { display: flex; height: 40px; background: #474747; color: #fff; }
.start { width: 48px; background: #404040; }
.search { width: 344px; display: flex; align-items: center; padding: 0 13px 0 12px; background: #f2f2f2; border: 1px solid #c3c3c3; }
.search input { flex: 1; min-width: 0; height: 30px; padding: 0 0 0 9px; border: 0; background: transparent; font-family: inherit; font-size: 14px; }
.search input::placeholder { color: #333; opacity: 1; }
.apps { display: flex; background: linear-gradient(90deg, #414347, #1e2442 28%, #1d2342); }
.apps button { width: 49px; }
.apps .current { width: 44px; background: #555970; border-bottom: 2px solid #79b9ed; margin-left: 3px; }
.stack { width: 4px; background: #5d616b; border-left: 1px solid #333; border-bottom: 2px solid #6faad9; }
.people { width: 28px; margin-left: auto; }
.tray { display: flex; align-items: center; margin-left: 98px; }
.tray button { width: 24px; height: 40px; }
.tray .weather { width: auto; gap: 8px; font-size: 14px; margin-right: 8px; }
.lang { width: 38px; padding-left: 6px; }
.clock { display: flex; flex-direction: column; align-items: center; width: 66px; line-height: 18px; }
.tray .notice { position: relative; width: 48px; margin-right: 3px; }
.notice span { position: absolute; left: 23px; top: 19px; width: 16px; height: 16px; border: 1px solid #aaa; border-radius: 8px; background: #474747; font-size: 11px; line-height: 14px; }
.peek { width: 5px; height: 40px; border-left: 1px solid #888; }
@media (max-width: 1000px) { .people { display: none; } .tray { margin-left: auto; } .search { width: 220px; } }
```
